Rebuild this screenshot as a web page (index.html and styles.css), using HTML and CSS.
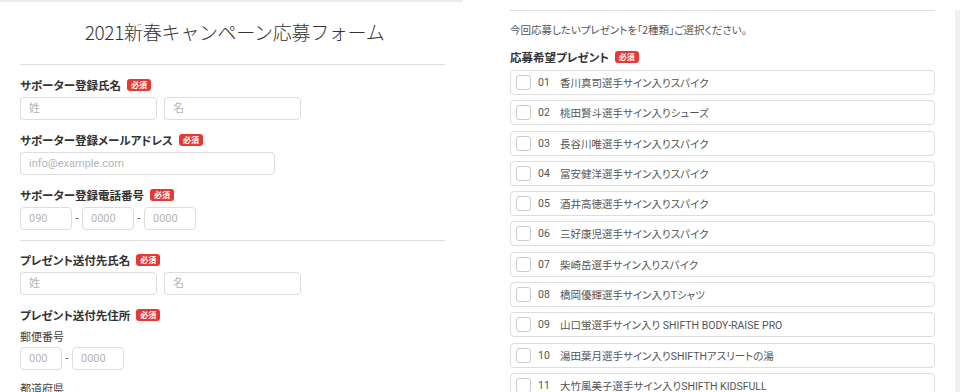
FILE: index.html
```html
<!DOCTYPE html>
<html>
  <head>
    <title>2021新春キャンペーン応募フォーム</title>
    <link rel="stylesheet" href="styles.css">
  </head>
  <body>
    <div class="page">

      <div class="panel left">
        <h1 class="title">2021新春キャンペーン応募フォーム</h1>
        <hr>

        <div class="field">
          <div class="label">サポーター登録氏名<span class="req">必須</span></div>
          <div class="row">
            <div class="input name">姓</div>
            <div class="input name">名</div>
          </div>
        </div>

        <div class="field">
          <div class="label">サポーター登録メールアドレス<span class="req">必須</span></div>
          <div class="row">
            <div class="input email">info@example.com</div>
          </div>
        </div>

        <div class="field">
          <div class="label">サポーター登録電話番号<span class="req">必須</span></div>
          <div class="row dashed">
            <div class="input tel">090</div>
            <span class="dash">-</span>
            <div class="input tel">0000</div>
            <span class="dash">-</span>
            <div class="input tel">0000</div>
          </div>
        </div>

        <hr class="sep">

        <div class="field">
          <div class="label">プレゼント送付先氏名<span class="req">必須</span></div>
          <div class="row">
            <div class="input name">姓</div>
            <div class="input name">名</div>
          </div>
        </div>

        <div class="field">
          <div class="label">プレゼント送付先住所<span class="req">必須</span></div>
          <div class="sub">郵便番号</div>
          <div class="row dashed">
            <div class="input zip1">000</div>
            <span class="dash">-</span>
            <div class="input zip2">0000</div>
          </div>
          <div class="sub pref">都道府県</div>
        </div>
      </div>

      <div class="panel right">
        <hr>
        <p class="note">今回応募したいプレゼントを「2種類」ご選択ください。</p>
        <div class="label">応募希望プレゼント<span class="req">必須</span></div>

        <ul class="choices">
          <li><span class="check"></span><span class="num">01</span>香川真司選手サイン入りスパイク</li>
          <li><span class="check"></span><span class="num">02</span>桃田賢斗選手サイン入りシューズ</li>
          <li><span class="check"></span><span class="num">03</span>長谷川唯選手サイン入りスパイク</li>
          <li><span class="check"></span><span class="num">04</span>冨安健洋選手サイン入りスパイク</li>
          <li><span class="check"></span><span class="num">05</span>酒井高徳選手サイン入りスパイク</li>
          <li><span class="check"></span><span class="num">06</span>三好康児選手サイン入りスパイク</li>
          <li><span class="check"></span><span class="num">07</span>柴崎岳選手サイン入りスパイク</li>
          <li><span class="check"></span><span class="num">08</span>橋岡優輝選手サイン入りTシャツ</li>
          <li><span class="check"></span><span class="num">09</span>山口蛍選手サイン入り SHIFTH BODY-RAISE PRO</li>
          <li><span class="check"></span><span class="num">10</span>湯田葉月選手サイン入りSHIFTHアスリートの湯</li>
          <li><span class="check"></span><span class="num">11</span>大竹風美子選手サイン入りSHIFTH KIDSFULL</li>
        </ul>
      </div>

      <div class="scrollbar"></div>
    </div>
  </body>
</html>
```

FILE: styles.css
```css
body {
  margin: 0;
  background-color: #ffffff;
  color: #333333;
  font-family: Roboto, "Noto Sans CJK JP", sans-serif;
  font-feature-settings: "palt";
  overflow: hidden;
}

.page {
  display: flex;
  height: 392px;
}

.panel {
  box-sizing: border-box;
}

.left {
  width: 463px;
  padding: 16px 18px 0 20px;
  border-top: 2px solid #ebebeb;
}

.right {
  width: 465px;
  margin-left: 27px;
  padding: 10px 20px 0 20px;
}

.scrollbar {
  width: 5px;
  margin-top: 10px;
  background-color: #f0f0f0;
}

hr {
  border: 0;
  border-top: 1px solid #dddddd;
  margin: 0;
}

.title {
  margin: 0;
  font-size: 19px;
  line-height: 28px;
  font-weight: 300;
  text-align: center;
  color: #333333;
  font-family: "Noto Sans CJK JP", sans-serif;
  font-feature-settings: normal;
  letter-spacing: -0.3px;
  padding-left: 4px;
}

.left hr {
  margin-top: 18px;
}

.left hr.sep {
  margin-top: 10px;
  margin-bottom: -1px;
}

.field {
  padding-top: 10px;
}

.label {
  font-family: "Noto Sans CJK JP", sans-serif;
  font-size: 11.5px;
  font-weight: bold;
  line-height: 20px;
  color: #333333;
  display: flex;
  align-items: center;
}

.req {
  display: inline-block;
  background-color: #e53935;
  color: #ffffff;
  font-size: 8px;
  font-weight: bold;
  line-height: 12px;
  padding: 0 4px;
  border-radius: 3px;
  margin-left: 6px;
}

.row {
  display: flex;
  gap: 7px;
  margin-top: 2px;
}

.row.dashed {
  gap: 0;
  align-items: center;
}

.dash {
  width: 10px;
  text-align: center;
  font-size: 11px;
  color: #555555;
}

.input {
  box-sizing: border-box;
  height: 23px;
  border: 1px solid #dddddd;
  border-radius: 4px;
  padding-left: 8px;
  font-size: 11px;
  line-height: 21px;
  color: #b5b5b5;
}

.name { width: 137px; }
.email { width: 255px; }
.tel { width: 52px; }
.zip1 { width: 42px; }
.zip2 { width: 52px; }

.sub {
  font-family: "Noto Sans CJK JP", sans-serif;
  font-size: 11px;
  line-height: 18px;
  color: #444444;
  margin-top: 2px;
}

.sub.pref {
  margin-top: 9px;
}

.note {
  margin: 11px 0 9px;
  font-family: "Noto Sans CJK JP", sans-serif;
  font-size: 10.5px;
  line-height: 16px;
  color: #555555;
}

.choices {
  list-style: none;
  margin: 3px 0 0;
  padding: 0;
}

.choices li {
  box-sizing: border-box;
  display: flex;
  align-items: center;
  height: 25px;
  margin-bottom: 5.3px;
  border: 1px solid #dddddd;
  border-radius: 4px;
  font-size: 10.5px;
  color: #555555;
}

.check {
  box-sizing: border-box;
  width: 15px;
  height: 15px;
  border: 1px solid #cccccc;
  border-radius: 3px;
  margin-left: 5px;
}

.num {
  margin-left: 7px;
  width: 22px;
}
```
